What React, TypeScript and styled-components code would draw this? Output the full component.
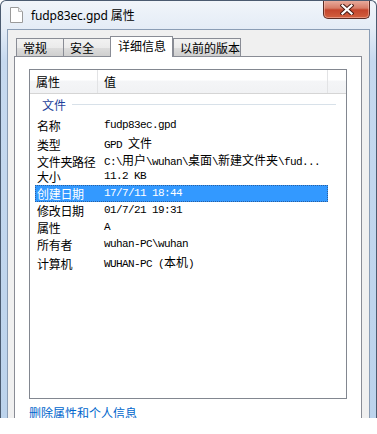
import React from "react";
import styled, { createGlobalStyle } from "styled-components";

const Global = createGlobalStyle`
  html, body { margin: 0; padding: 0; background: #ffffff; }
  body { font-family: "Noto Sans CJK SC", "Noto Sans", sans-serif; font-size: 12px; color: #000; }
  #root { width: 377px; }
`;

const Window = styled.div`
  width: 377px;
  height: 418px;
  box-sizing: border-box;
  border: 1px solid #4b5b70;
  border-bottom: none;
  border-radius: 6px 6px 0 0;
  background: linear-gradient(to bottom, #f1f5fa 0px, #e4ecf6 28px, #c6d9ef 60px, #bcd3ec 100%);
  display: flex;
  flex-direction: column;
  overflow: hidden;
`;

const TitleBar = styled.div`
  height: 28px;
  flex: none;
  display: flex;
  align-items: center;
  padding-left: 9px;
`;

const TitleText = styled.span`
  margin-left: 8px;
  font-family: "Noto Sans", "Noto Sans CJK SC", sans-serif;
  font-size: 12px;
  color: #000;
  letter-spacing: -0.1px;
  line-height: 14px;
  margin-top: 2px;
`;

const CloseBtn = styled.div`
  align-self: flex-start;
  width: 47px;
  height: 19px;
  margin: -1px 6px 0 auto;
  box-sizing: border-box;
  border: 1px solid #5b2c24;
  border-top: none;
  border-radius: 0 0 5px 5px;
  background: linear-gradient(to bottom, #e9b0a2 0%, #d77d68 45%, #c4452c 55%, #d2603f 100%);
  box-shadow: inset 0 0 0 1px rgba(255, 210, 200, 0.45);
  display: flex;
  align-items: center;
  justify-content: center;
`;

const Client = styled.div`
  flex: 1;
  margin: 0 6px;
  border: 1px solid #8a9db5;
  border-bottom: none;
  background: #f0f0f0;
  padding: 6px 7px 0 6px;
  display: flex;
  flex-direction: column;
  min-height: 0;
`;

const TabStrip = styled.div`
  display: flex;
  align-items: flex-end;
  height: 21px;
  padding-left: 2px;
  margin-bottom: -1px;
  position: relative;
  z-index: 1;
`;

const Tab = styled.div<{ $w: number; $active?: boolean }>`
  box-sizing: border-box;
  width: ${(p) => p.$w}px;
  height: ${(p) => (p.$active ? 21 : 18)}px;
  margin-bottom: ${(p) => (p.$active ? 0 : 1)}px;
  border: 1px solid #898c95;
  border-bottom: none;
  border-right: ${(p) => (p.$active ? "1px solid #898c95" : "none")};
  background: ${(p) =>
    p.$active ? "#ffffff" : "linear-gradient(to bottom, #f2f2f2 0%, #ebebeb 50%, #dddddd 51%, #cfcfcf 100%)"};
  padding-left: ${(p) => (p.$active ? 7 : 6)}px;
  font-size: 12px;
  line-height: ${(p) => (p.$active ? 18 : 17)}px;
  white-space: nowrap;
  &:last-child {
    border-right: 1px solid #898c95;
  }
`;

const Panel = styled.div`
  flex: 1;
  border: 1px solid #898c95;
  border-bottom: none;
  background: #ffffff;
  padding: 12px 14px 0 14px;
  display: flex;
  flex-direction: column;
`;

const ListBox = styled.div`
  height: 330px;
  box-sizing: border-box;
  border: 1px solid #828790;
  background: #fff;
  display: flex;
  flex-direction: column;
`;

const Header = styled.div`
  height: 24px;
  box-sizing: border-box;
  display: grid;
  grid-template-columns: 68px 230px 1fr;
  border-bottom: 1px solid #d5d5d5;
  background: linear-gradient(to bottom, #ffffff 0%, #ffffff 42%, #f4f5f7 50%, #f1f2f4 100%);
`;

const HeadCell = styled.div<{ $pad: number; $divider?: boolean }>`
  padding-left: ${(p) => p.$pad}px;
  border-right: ${(p) => (p.$divider ? "1px solid #e2e3e5" : "none")};
  font-size: 12px;
  line-height: 23px;
`;

const Group = styled.div`
  height: 21px;
  margin-bottom: 2px;
  display: flex;
  align-items: center;
  padding-left: 12px;
  padding-right: 10px;
`;

const GroupTitle = styled.span`
  color: #1e3f9a;
  font-size: 12px;
  line-height: 14px;
`;

const GroupLine = styled.div`
  flex: 1;
  height: 1px;
  margin-left: 6px;
  background: #d8e1e9;
`;

const Rows = styled.div`
  padding-left: 5px;
  display: flex;
  flex-direction: column;
`;

const Row = styled.div<{ $selected?: boolean }>`
  width: 293px;
  height: 17px;
  display: grid;
  grid-template-columns: 69px 1fr;
  align-items: center;
  background: ${(p) => (p.$selected ? "#3399ff" : "transparent")};
  color: ${(p) => (p.$selected ? "#ffffff" : "#000000")};
  outline: ${(p) => (p.$selected ? "1px dotted #2b5f9e" : "none")};
  outline-offset: -1px;
`;

const Label = styled.span`
  padding-left: 2px;
  font-size: 12px;
  line-height: 17px;
  white-space: nowrap;
  letter-spacing: -0.3px;
`;

const Value = styled.span`
  font-family: "Liberation Mono", "Noto Sans CJK SC", monospace;
  font-size: 11px;
  letter-spacing: -0.6px;
  line-height: 17px;
  white-space: pre;
`;

const Cjk = styled.span`
  font-family: "Noto Sans CJK SC", sans-serif;
  font-size: 12px;
  letter-spacing: 0;
`;

const Link = styled.div`
  margin-top: 6px;
  color: #0066cc;
  font-size: 12px;
  line-height: 16px;
`;

const DocIcon = () => (
  <svg width="13" height="16" viewBox="0 0 13 16">
    <path d="M0.5 0.5 H8.5 L12.5 4.5 V15.5 H0.5 Z" fill="#ffffff" stroke="#9a9a9a" />
    <path d="M8.5 0.5 V4.5 H12.5" fill="#eeeeee" stroke="#b5b5b5" />
  </svg>
);

const CloseGlyph = () => (
  <svg width="14" height="11" viewBox="0 0 14 11">
    <path d="M2.5 1.5 L11.5 9.5 M11.5 1.5 L2.5 9.5" stroke="#4a1d16" strokeWidth="4.2" strokeLinecap="square" />
    <path d="M2.5 1.5 L11.5 9.5 M11.5 1.5 L2.5 9.5" stroke="#ffffff" strokeWidth="2.2" strokeLinecap="square" />
  </svg>
);

const mixed = (text: string) =>
  text.split(/([\u3000-\u9fff\uff00-\uffef]+)/).map((part, i) =>
    /[\u3000-\u9fff\uff00-\uffef]/.test(part) ? <Cjk key={i}>{part}</Cjk> : <React.Fragment key={i}>{part}</React.Fragment>
  );

const rows: { label: string; value: string; selected?: boolean }[] = [
  { label: "名称", value: "fudp83ec.gpd" },
  { label: "类型", value: "GPD 文件" },
  { label: "文件夹路径", value: "C:\\用户\\wuhan\\桌面\\新建文件夹\\fud..." },
  { label: "大小", value: "11.2 KB" },
  { label: "创建日期", value: "17/7/11 18:44", selected: true },
  { label: "修改日期", value: "01/7/21 19:31" },
  { label: "属性", value: "A" },
  { label: "所有者", value: "wuhan-PC\\wuhan" },
  { label: "计算机", value: "WUHAN-PC (本机)" },
];

const tabs = [
  { name: "常规", w: 47 },
  { name: "安全", w: 47 },
  { name: "详细信息", w: 63, active: true },
  { name: "以前的版本", w: 68 },
];

export default function App() {
  return (
    <>
      <Global />
      <Window>
        <TitleBar>
          <DocIcon />
          <TitleText>fudp83ec.gpd 属性</TitleText>
          <CloseBtn>
            <CloseGlyph />
          </CloseBtn>
        </TitleBar>
        <Client>
          <TabStrip>
            {tabs.map((t) => (
              <Tab key={t.name} $w={t.w} $active={t.active}>
                {t.name}
              </Tab>
            ))}
          </TabStrip>
          <Panel>
            <ListBox>
              <Header>
                <HeadCell $pad={6} $divider>
                  属性
                </HeadCell>
                <HeadCell $pad={6} $divider>
                  值
                </HeadCell>
                <HeadCell $pad={0} />
              </Header>
              <Group>
                <GroupTitle>文件</GroupTitle>
                <GroupLine />
              </Group>
              <Rows>
                {rows.map((r) => (
                  <Row key={r.label} $selected={r.selected}>
                    <Label>{r.label}</Label>
                    <Value>{mixed(r.value)}</Value>
                  </Row>
                ))}
              </Rows>
            </ListBox>
            <Link>删除属性和个人信息</Link>
          </Panel>
        </Client>
      </Window>
    </>
  );
}
